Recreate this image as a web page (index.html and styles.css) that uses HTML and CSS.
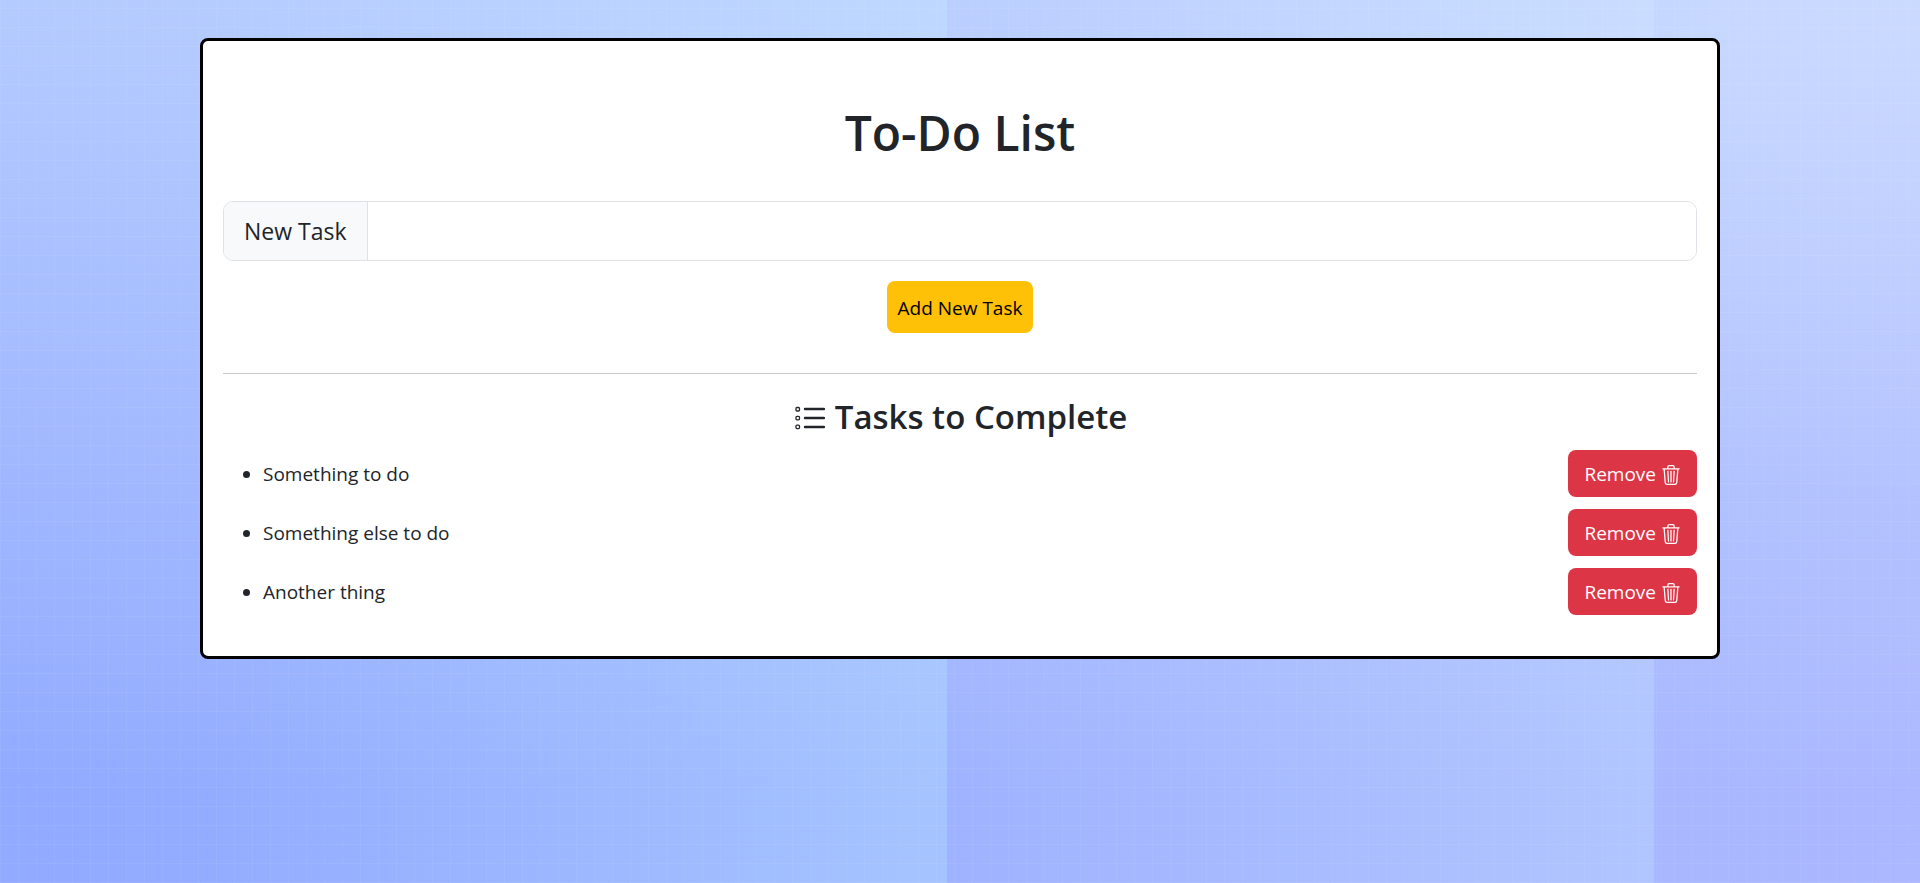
FILE: index.html
```html
<!DOCTYPE html>
<html lang="en">
<head>
<meta charset="utf-8">
<meta name="viewport" content="width=device-width, initial-scale=1">
<title>To-Do List</title>
<link rel="stylesheet" href="styles.css">
</head>
<body>
<svg class="sprite" aria-hidden="true">
  <symbol id="trash" viewBox="0 0 16 16"><path d="M6.500 1h3a.5.5 0 0 1 .5.5v1H6v-1a.5.5 0 0 1 .5-.5M11 2.500v-1A1.500 1.500 0 0 0 9.500 0h-3A1.500 1.500 0 0 0 5 1.500v1H1.500a.5.5 0 0 0 0 1h.538l.853 10.660A2 2 0 0 0 4.885 16h6.230a2 2 0 0 0 1.994-1.840l.853-10.660h.538a.5.5 0 0 0 0-1zm1.958 1-.846 10.580a1 1 0 0 1-.997.920h-6.230a1 1 0 0 1-.997-.920L3.042 3.500zm-7.487 1a.5.5 0 0 1 .528.470l.5 8.500a.5.5 0 0 1-.998.060L5 5.030a.5.5 0 0 1 .470-.530Zm5.058 0a.5.5 0 0 1 .470.530l-.5 8.500a.5.5 0 1 1-.998-.060l.5-8.500a.5.5 0 0 1 .528-.470M8 4.500a.5.5 0 0 1 .5.5v8.500a.5.5 0 0 1-1 0V5a.5.5 0 0 1 .5-.5"/></symbol>
</svg>
<main class="card">
  <h1 class="title">To-Do List</h1>
  <form class="task-form">
    <div class="input-group">
      <label class="input-label" for="task">New Task</label>
      <input class="input" id="task" type="text">
    </div>
    <button class="button button-add" type="button">Add New Task</button>
  </form>
  <hr class="divider">
  <h2 class="subtitle">
    <svg class="list-icon" viewBox="0 0 32 32" aria-hidden="true"><path d="M12 8h19M12 17h19M12 26h19" stroke-width="2.400"/><g stroke-width="1.300"><rect x="3" y="6.500" width="3.500" height="3.500" rx="1"/><rect x="3" y="15.300" width="3.500" height="3.500" rx="1"/><rect x="3" y="24.100" width="3.500" height="3.500" rx="1"/></g></svg>
    Tasks to Complete
  </h2>
  <ul class="tasks">
    <li class="task"><div class="task-row"><span>Something to do</span><button class="button button-remove" type="button">Remove <svg class="trash-icon" aria-hidden="true"><use href="#trash"/></svg></button></div></li>
    <li class="task"><div class="task-row"><span>Something else to do</span><button class="button button-remove" type="button">Remove <svg class="trash-icon" aria-hidden="true"><use href="#trash"/></svg></button></div></li>
    <li class="task"><div class="task-row"><span>Another thing</span><button class="button button-remove" type="button">Remove <svg class="trash-icon" aria-hidden="true"><use href="#trash"/></svg></button></div></li>
  </ul>
</main>
</body>
</html>
```
FILE: styles.css
```css
* { box-sizing: border-box; }

body {
  margin: 0;
  min-height: 100vh;
  padding: 38px 200px;
  color: #212529;
  font-family: "Segoe UI", "Open Sans", sans-serif;
  font-size: 19px;
  line-height: 30px;
  background:
    repeating-linear-gradient(0deg, rgba(255, 255, 255, .06) 0 1px, transparent 1px 19px),
    repeating-linear-gradient(90deg, rgba(255, 255, 255, .05) 0 1px, transparent 1px 18px),
    radial-gradient(ellipse 900px 500px at 100% 0, rgba(220, 234, 255, .35), rgba(220, 234, 255, 0)),
    linear-gradient(rgba(215, 236, 255, .5), rgba(215, 236, 255, 0) 90%),
    linear-gradient(90deg, #92aaff, #94acff 200px, #a5c4ff 947px, #9fb2ff 947px, #b1c5ff 1654px, #a8b7ff 1654px, #acb8ff);
}

.sprite { display: none; }

.card {
  padding: 60px 20px 41px;
  border: 3px solid #000;
  border-radius: 8px;
  background: #fff;
}

.title {
  margin: 0 0 36px;
  font-size: 48px;
  font-weight: 600;
  line-height: 64px;
  text-align: center;
}

.task-form {
  display: flex;
  flex-direction: column;
  align-items: center;
  gap: 20px;
}

.input-group {
  display: flex;
  width: 100%;
  height: 60px;
  border: 1px solid #dee2e6;
  border-radius: 10px;
  overflow: hidden;
}

.input-label {
  display: flex;
  align-items: center;
  padding: 0 20px;
  border-right: 1px solid #dee2e6;
  background: #f8f9fa;
  font-size: 23px;
}

.input {
  flex: 1;
  min-width: 0;
  padding: 0 20px;
  border: 0;
  background: #fff;
  font: inherit;
}

.button {
  border: 0;
  border-radius: 8px;
  font: inherit;
}

.button-add {
  padding: 12px 11px 10px;
  background: #ffc107;
  color: #000;
}

.divider {
  margin: 40px 0 20px;
  border: 0;
  border-top: 1px solid #c8c9ca;
}

.subtitle {
  display: flex;
  align-items: center;
  justify-content: center;
  gap: 10px;
  margin: 0 0 10px;
  font-size: 33px;
  font-weight: 600;
  line-height: 46px;
}

.list-icon {
  width: 32px;
  height: 32px;
  fill: none;
  stroke: #212529;
  stroke-linecap: round;
}

.tasks {
  display: flex;
  flex-direction: column;
  gap: 12px;
  margin: 0;
  padding-left: 40px;
}

.task-row {
  display: flex;
  align-items: center;
  justify-content: space-between;
}

.button-remove {
  display: flex;
  align-items: center;
  gap: 5px;
  padding: 10px 16px 8px;
  line-height: 29px;
  background: #dc3545;
  color: #fff;
}

.trash-icon {
  width: 20px;
  height: 20px;
  fill: currentColor;
}
```
